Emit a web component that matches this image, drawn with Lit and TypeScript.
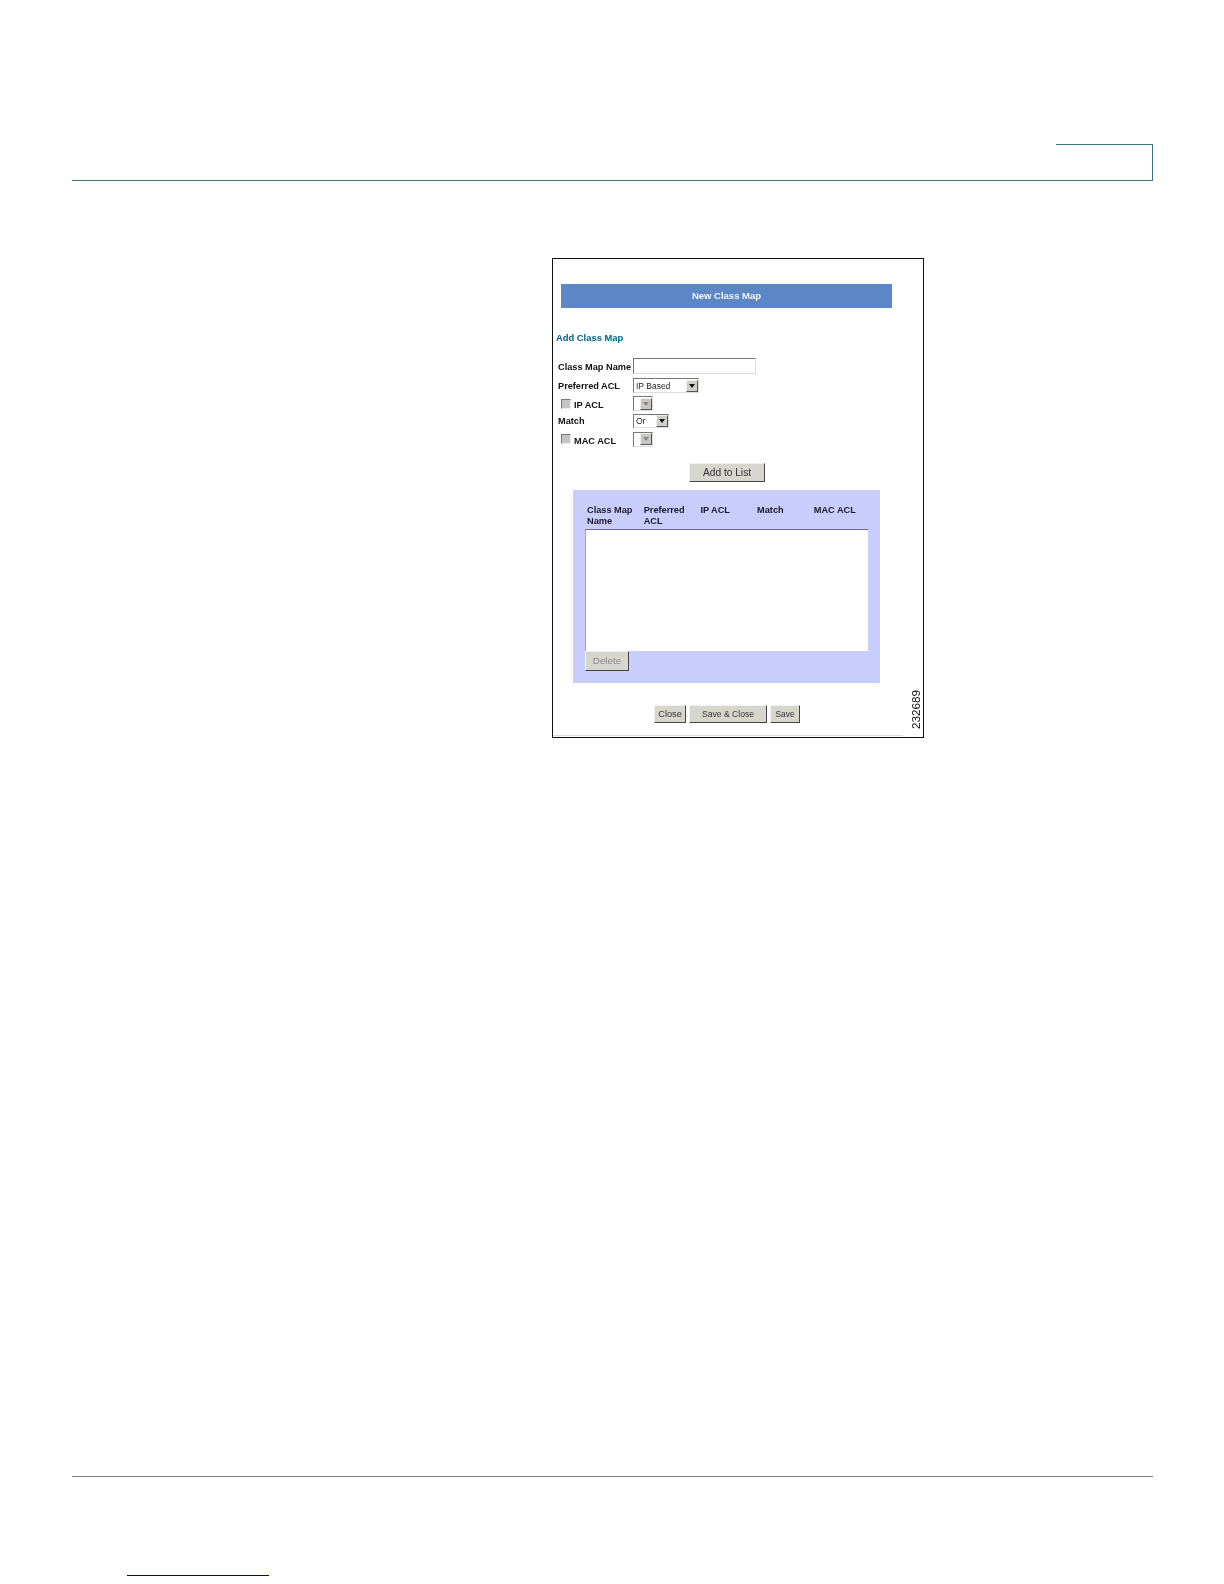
import { LitElement, html, css } from "lit";
import { customElement } from "lit/decorators.js";

@customElement("app-root")
export class AppRoot extends LitElement {
  static styles = css`
    :host { display: block; width: 1224px; height: 1584px; background: #fff; font-family: "Liberation Sans", Arial, sans-serif; color: #111; overflow: hidden; position: relative; }
    .head { margin: 144px 71px 0 72px; height: 36px; border-bottom: 1px solid #3f7382; display: flex; justify-content: flex-end; }
    .tab { width: 96px; border-top: 1px solid #3f7382; border-right: 1px solid #3f7382; }
    .fig { margin: 77px 0 0 552px; width: 372px; height: 480px; box-sizing: border-box; border: 1px solid #111; position: relative; display: flex; flex-direction: column; }
    .fig > * { filter: blur(0.25px); }
    .fig::after { content: ""; position: absolute; left: 0; right: 20px; bottom: 1px; height: 1px; background: #ddd; }
    .banner { margin: 25px 0 0 8px; width: 331px; height: 24px; padding-bottom: 2px; box-sizing: border-box; background: #5b87c6; color: #f4f6fb; font-size: 9.5px; font-weight: 700; display: flex; align-items: center; justify-content: center; }
    .title { margin: 24px 0 0 3px; font-size: 9.4px; line-height: 12px; font-weight: 700; color: #005f86; }
    .form { margin: 12px 0 0 5px; display: grid; grid-template-columns: 75px auto; justify-content: start; }
    .lbl { box-sizing: border-box; font-size: 9.2px; font-weight: 700; display: flex; align-items: center; gap: 3px; white-space: nowrap; }
    .lbl.ind { padding-left: 3px; }
    .lbl.ind b { padding-top: 3px; }
    .lbl.first { padding-top: 1px; }
    .cell { display: flex; align-items: center; }
    .r0 { height: 20px; }
    .r1 { height: 19px; }
    .r2 { height: 17px; }
    .r3 { height: 18px; }
    .check { width: 8px; height: 8px; background: #c4c4c4; border: 1px solid; border-color: #777 #eee #eee #777; }
    .text { width: 121px; height: 14px; background: #fff; border: 1px solid; border-color: #777 #ddd #ddd #777; }
    .sel { box-sizing: border-box; height: 15px; background: #fff; border: 1px solid; border-color: #777 #ddd #ddd #777; font-size: 8.5px; color: #222; display: flex; align-items: center; justify-content: space-between; padding: 0 0 0 2px; }
    .sel.a { width: 66px; }
    .sel.b { width: 36px; height: 14px; }
    .sel.c { width: 20px; }
    .arr { width: 12px; height: 12px; background: #d0d0c8; border: 1px solid; border-color: #eee #555 #555 #eee; box-sizing: border-box; display: flex; align-items: center; justify-content: center; }
    .arr i { width: 0; height: 0; border: 3px solid transparent; border-top: 4px solid #111; border-bottom: 0; }
    .off .arr i { border-top-color: #888; }
    .off .arr { background: #c8c8c0; }
    .btn { box-sizing: border-box; display: flex; align-items: center; justify-content: center; background: #d6d5ce; border: 1px solid; border-color: #f2f2ee #444 #444 #f2f2ee; color: #333; font-size: 9px; }
    .add { margin: 15px 0 0 136px; width: 76px; height: 19px; font-size: 10.2px; }
    .panel { margin: 8px 0 0 20px; width: 307px; height: 193px; box-sizing: border-box; background: #c9cdfc; padding: 15px 12px 0; display: flex; flex-direction: column; align-items: flex-start; }
    .cols { display: grid; grid-template-columns: repeat(5, 56.7px); padding-left: 2px; font-size: 9.2px; font-weight: 700; line-height: 11.2px; height: 24px; color: #1a1a2a; }
    .list { width: 283px; height: 122px; box-sizing: border-box; background: #fff; border-top: 1px solid #6b6b80; border-left: 1px solid #a0a0b4; }
    .btn.del { width: 44px; height: 20px; padding-bottom: 1px; color: #888; font-size: 9.8px; }
    .foot { margin: 22px 0 0 101px; display: flex; gap: 3px; }
    .foot .btn { height: 18px; padding-bottom: 1px; }
    .btn.f1 { width: 32px; font-size: 9.2px; }
    .btn.f2 { width: 78px; font-size: 8.6px; }
    .btn.f3 { width: 30px; font-size: 8.4px; }
    .num { position: absolute; right: 1px; bottom: 8px; writing-mode: vertical-rl; transform: rotate(180deg); font-size: 11.7px; line-height: 13px; color: #111; }
    .rule { margin: 738px 71px 0 72px; height: 1px; background: #808080; }
    .link { margin: 98px 0 0 127px; width: 142px; height: 1px; background: #00008b; }
  `;

  private sel(cls: string, label: string, off = false) {
    return html`<div class="sel ${cls} ${off ? "off" : ""}"><span>${label}</span><span class="arr"><i></i></span></div>`;
  }

  render() {
    return html`
      <div class="head"><div class="tab"></div></div>
      <div class="fig">
        <div class="banner">New Class Map</div>
        <div class="title">Add Class Map</div>
        <div class="form">
          <div class="lbl first r0">Class Map Name</div>
          <div class="cell r0"><div class="text"></div></div>
          <div class="lbl r1">Preferred ACL</div>
          <div class="cell r1">${this.sel("a", "IP Based")}</div>
          <div class="lbl ind r2"><span class="check"></span><b>IP ACL</b></div>
          <div class="cell r2">${this.sel("c", "", true)}</div>
          <div class="lbl r3">Match</div>
          <div class="cell r3">${this.sel("b", "Or")}</div>
          <div class="lbl ind r3"><span class="check"></span><b>MAC ACL</b></div>
          <div class="cell r3">${this.sel("c", "", true)}</div>
        </div>
        <div class="btn add">Add to List</div>
        <div class="panel">
          <div class="cols">
            <div>Class Map<br />Name</div>
            <div>Preferred<br />ACL</div>
            <div>IP ACL</div>
            <div>Match</div>
            <div>MAC ACL</div>
          </div>
          <div class="list"></div>
          <div class="btn del">Delete</div>
        </div>
        <div class="foot">
          <div class="btn f1">Close</div>
          <div class="btn f2">Save &amp; Close</div>
          <div class="btn f3">Save</div>
        </div>
        <div class="num">232689</div>
      </div>
      <div class="rule"></div>
      <div class="link"></div>
    `;
  }
}
